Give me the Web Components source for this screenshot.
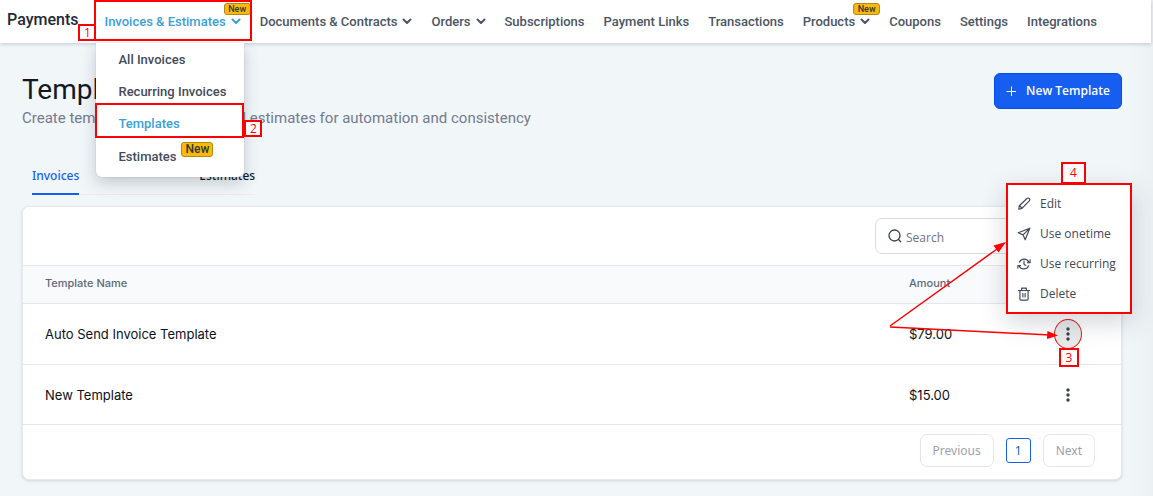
<!DOCTYPE html>
<html lang="en">
<head>
<meta charset="utf-8">
<title>Payments – Templates</title>
<style>
  html { min-height: 100%; background: linear-gradient(to left, #ebf0f3, #f1f6f9 24px); }
  body { margin: 0; font-family: Roboto, sans-serif; color: #111827; }
</style>
</head>
<body>
<payments-app></payments-app>

<script>
const define = (name, css, html, setup) => {
  const tpl = document.createElement('template');
  tpl.innerHTML = `<style>*{box-sizing:border-box}${css}</style>${html}`;
  customElements.define(name, class extends HTMLElement {
    constructor() {
      super();
      this.attachShadow({ mode: 'open' }).append(tpl.content.cloneNode(true));
    }
    connectedCallback() { if (setup) setup(this, this.shadowRoot); }
  });
};

/* Small yellow "New" pill */
define('new-badge', `
  :host { display: inline-flex; align-items: center; justify-content: center; width: 27px; height: 12px;
    box-sizing: border-box; border: 1px solid #b38813; border-radius: 3px; background: #fdb90b; color: #2b3a33;
    font: 500 9px/10px Roboto, sans-serif; }
  :host([large]) { width: 32px; height: 15px; font-size: 12px; line-height: 13px; }
`, `<slot>New</slot>`);

/* Numbered tag of a walkthrough step */
define('step-tag', `
  :host { position: absolute; z-index: 30; display: flex; align-items: center; justify-content: center;
    box-sizing: border-box; width: 18px; height: 17px; border: 2px solid #f00; background: #fff; color: #f00;
    font: 400 12px/12px "Open Sans", sans-serif; }
  :host([wide]) { width: 25px; height: 22px; }
  :host([mid]) { width: 20px; height: 19px; }
`, `<slot></slot>`);

define('nav-item', `
  :host { display: flex; position: relative; flex: none; align-items: center; height: 43px; }
  a, button { display: flex; align-items: center; gap: 5px; padding: 0; border: 0; background: none;
    color: #4b5563; font: 500 13px/20px Roboto, sans-serif; text-decoration: none; white-space: nowrap; cursor: pointer; }
  :host([active]) button { color: #3ba0da; }
  svg { display: block; width: 10px; height: 10px; fill: none; stroke: currentColor; stroke-width: 2;
    stroke-linecap: round; stroke-linejoin: round; }
  ::slotted(new-badge) { position: absolute; top: 3px; right: -10px; }
`, `<span id="c"></span><slot name="badge"></slot><slot name="menu"></slot>`, (el, root) => {
  const label = el.getAttribute('label');
  root.getElementById('c').innerHTML = el.hasAttribute('menu')
    ? `<button type="button" aria-haspopup="true">${label}<svg viewBox="0 0 10 10" aria-hidden="true"><path d="M1.500 2.500l3.500 3.500 3.500-3.500"/></svg></button>`
    : `<a href="#">${label}</a>`;
});

/* Opened submenu below a nav item */
define('nav-menu', `
  :host { position: absolute; z-index: 20; top: 43px; left: -8px; box-sizing: border-box; width: 148px; padding: 1px 0 4px;
    background: #fff; border-radius: 0 0 6px 6px; box-shadow: 0 6px 16px rgba(30,41,59,.22), 0 0 2px rgba(30,41,59,.15); }
  ul { list-style: none; margin: 0; padding: 0; }
  li { position: relative; display: flex; align-items: center; gap: 5px; height: 32px; padding-left: 22px; }
  li:last-child { height: 33px; }
  a { color: #434b5a; font: 500 13px/20px Roboto, sans-serif; text-decoration: none; white-space: nowrap; }
  .on a { color: #3ba0da; }
  .on::after { content: ""; position: absolute; inset: -5px 0 2px -1px; border: 2px solid #f00; pointer-events: none; }
  new-badge { margin-bottom: 14px; }
  step-tag { top: 77px; right: -18px; }
`, `<ul>
  <li><a href="#">All Invoices</a></li>
  <li><a href="#">Recurring Invoices</a></li>
  <li class="on"><a href="#" aria-current="page">Templates</a></li>
  <li><a href="#">Estimates</a><new-badge large></new-badge></li>
</ul><step-tag>2</step-tag>`);

define('nav-focus', `
  :host { position: absolute; z-index: 25; inset: 0 -11px 2px -10px; border: 2px solid #f00; pointer-events: none; }
  step-tag { top: 22px; left: -18px; }
`, `<step-tag>1</step-tag>`);

define('app-nav', `
  :host { display: block; position: relative; z-index: 10; margin-right: 2px; background: #fff;
    box-shadow: 0 1px 4px rgba(30,41,59,.22); }
  nav { display: flex; align-items: center; gap: 19px; height: 43px; padding-left: 7px; }
  strong { margin: 0 7px 4px 0; font: 500 16px/24px Roboto, sans-serif; color: #1f2937; }
`, `<nav aria-label="Payments">
  <strong>Payments</strong>
  <nav-item label="Invoices &amp; Estimates" menu active>
    <new-badge slot="badge"></new-badge>
    <nav-focus slot="menu"></nav-focus>
    <nav-menu slot="menu"></nav-menu>
  </nav-item>
  <nav-item label="Documents &amp; Contracts" menu></nav-item>
  <nav-item label="Orders" menu></nav-item>
  <nav-item label="Subscriptions"></nav-item>
  <nav-item label="Payment Links"></nav-item>
  <nav-item label="Transactions"></nav-item>
  <nav-item label="Products" menu><new-badge slot="badge"></new-badge></nav-item>
  <nav-item label="Coupons"></nav-item>
  <nav-item label="Settings"></nav-item>
  <nav-item label="Integrations"></nav-item>
</nav>`);

define('page-header', `
  :host { display: flex; justify-content: space-between; align-items: flex-start; }
  h1 { margin: 0; font: 400 28px/34px Roboto, sans-serif; color: #111827; }
  p { margin: 1px 0 0; font: 400 15px/20px Roboto, sans-serif; color: #737b90; }
  button { display: flex; align-items: center; justify-content: center; gap: 10px; width: 128px; height: 36px;
    padding: 0; border: 1px solid #004eeb; border-radius: 6px; background: #155eef; color: #fff;
    font: 600 12px/20px "Open Sans", sans-serif; white-space: nowrap; }
  svg { width: 10px; height: 10px; stroke: #fff; stroke-width: 1; fill: none; }
`, `<div><h1>Templates</h1>
  <p>Create templates for invoices and estimates for automation and consistency</p></div>
  <button type="button"><svg viewBox="0 0 10 10" aria-hidden="true"><path d="M5.500 .5v10M.5 5.500h10"/></svg>New Template</button>`);

define('tab-bar', `
  :host { display: flex; }
  div { display: flex; gap: 120px; margin-left: 10px; border-bottom: 1px solid #eceaf0; }
  button { height: 30px; margin-bottom: -1px; padding: 0 0 7px; border: 0; border-bottom: 2px solid transparent;
    background: none; color: #111827; font: 500 12px/18px "Noto Sans", sans-serif; }
  button[aria-selected=true] { color: #155eef; border-color: #155eef; }
`, `<div role="tablist">
  <button role="tab" aria-selected="true">Invoices</button>
  <button role="tab" aria-selected="false">Estimates</button></div>`);

define('row-menu', `
  :host { position: absolute; z-index: 8; top: -136px; right: -50px; box-sizing: border-box; width: 126px; padding: 4px 0 3px;
    border: 2px solid #f00; background: #fff; box-shadow: 0 8px 24px rgba(30,41,59,.2); }
  button { display: flex; align-items: center; gap: 9px; width: 100%; height: 30px; padding: 0 0 0 9px; border: 0;
    background: none; color: #3f4858; font: 400 12px/20px "Open Sans", sans-serif; text-align: left; white-space: nowrap; }
  svg { flex: none; width: 14px; height: 14px; fill: none; stroke: #3f4858; stroke-width: 2; stroke-linecap: round; stroke-linejoin: round; }
  step-tag { top: -23px; left: 53px; }
`, `<div role="menu">
  <button role="menuitem"><svg viewBox="0 0 24 24"><path d="M3 21l1-6L17 2.500a2.800 2.800 0 0 1 4 4L8.500 19.500 3 21zM4.500 15l4 4"/></svg>Edit</button>
  <button role="menuitem"><svg viewBox="0 0 24 24"><path d="M22 2L2 10l8.500 3.500L14 22 22 2zM22 2L10.500 13.500M14 22l-3.500-8.500"/></svg>Use onetime</button>
  <button role="menuitem"><svg viewBox="0 0 24 24"><path d="M4 9a9 9 0 0 1 16.500 0M22.500 5v4.500H18M20 15a9 9 0 0 1-16.500 0M1.500 19v-4.500H6M12 7v5.500l3 2"/></svg>Use recurring</button>
  <button role="menuitem"><svg viewBox="0 0 24 24"><path d="M2.500 6h19M8 6V2h8v4M5 6v15a1.500 1.500 0 0 0 1.500 1.500h11A1.500 1.500 0 0 0 19 21V6M10 11v6M14 11v6"/></svg>Delete</button>
</div><step-tag wide>4</step-tag>`);

/* Arrows that lead from the row to its menu and its menu button */
define('row-arrows', `
  :host { position: absolute; z-index: 9; top: -79px; right: 24px; pointer-events: none; }
  svg { display: block; width: 170px; height: 100px; }
`, `<svg viewBox="0 0 170 100" aria-hidden="true"><g fill="none" stroke="#f00" stroke-width="1.500"><path d="M2 86L109 9"/><path d="M2 87l160 8"/></g>
  <path fill="#f00" d="M118 2l-7.500 10.500-5-7zM170 95.500l-11 3.500.4-8z"/></svg>`);

define('kebab-button', `
  :host { display: inline-flex; position: relative; vertical-align: middle; }
  button { display: flex; align-items: center; justify-content: center; width: 28px; height: 30px; padding: 0;
    border: 1px solid transparent; border-radius: 50%; background: none; }
  :host([open]) button { border-color: #f0101a; background: #e8eaea; }
  svg { width: 4px; height: 16px; fill: #374151; }
`, `<button type="button" aria-label="Row actions"><svg viewBox="0 0 4 16"><circle cx="2" cy="3" r="1.700"/><circle cx="2" cy="8" r="1.700"/><circle cx="2" cy="13" r="1.700"/></svg></button><slot></slot>`);

define('search-box', `
  :host { display: block; }
  label { display: flex; align-items: center; gap: 4px; height: 36px; padding: 0 12px;
    border: 1px solid #d9dce3; border-radius: 7px; background: #fff; }
  svg { flex: none; width: 14px; height: 14px; fill: none; stroke: #374151; stroke-width: 1.300; stroke-linecap: round; }
  input { flex: 1; min-width: 0; height: 22px; padding: 2px 0 0; border: 0; outline: 0; background: none; font: 400 12px/20px "Open Sans", sans-serif; }
  input::placeholder { color: #6b7280; opacity: 1; }
`, `<label><svg viewBox="0 0 14 14" aria-hidden="true"><circle cx="6.500" cy="6.500" r="5.500"/><path d="M10.500 10.500l2.200 2.200"/></svg>
  <input type="search" placeholder="Search" aria-label="Search"></label>`);

define('page-controls', `
  :host { display: flex; align-items: center; justify-content: flex-end; gap: 12px; padding: 9px 26px 12px; }
  button { height: 33px; padding: 0 12px; border: 1px solid #e4e6ee; border-radius: 7px; background: #fff;
    color: #9ba1ab; font: 400 12px/18px "Noto Sans", sans-serif; }
  .current { width: 25px; height: 25px; padding: 0; border-color: #155eef; border-radius: 3px; color: #155eef; }
`, `<button type="button">Previous</button><button type="button" class="current" aria-current="page">1</button><button type="button">Next</button>`);

define('template-card', `
  :host { display: block; background: #fff; border: 1px solid #e6e8ee; border-radius: 7px; box-shadow: 0 1px 3px rgba(30,41,59,.16); }
  .tools { display: flex; justify-content: flex-end; padding: 11px 10px 11px; }
  search-box { width: 236px; }
  table { width: 100%; border-collapse: collapse; table-layout: fixed; font: 400 13px/20px Inter, sans-serif; color: #0b1020; }
  th, td { padding: 0 0 0 22px; text-align: left; border-top: 1px solid #e5e7ef; border-bottom: 1px solid #e5e7ef; }
  th { height: 38px; padding-bottom: 3px; background: #f8fafc; color: #5f6878; font: 500 11px/18px Inter, sans-serif; }
  td { height: 61px; }
  tr:last-child td { height: 60px; }
  .amount { width: 128px; } .act { width: 106px; padding: 0; text-align: center; }
  .act step-tag { top: 29px; left: 5px; }
`, `<div class="tools"><search-box></search-box></div>
<table>
  <thead><tr><th scope="col">Template Name</th><th scope="col" class="amount">Amount</th><th class="act"></th></tr></thead>
  <tbody>
    <tr><td>Auto Send Invoice Template</td><td>$79.00</td><td class="act"><kebab-button open>
      <row-menu></row-menu><row-arrows></row-arrows><step-tag mid>3</step-tag></kebab-button></td></tr>
    <tr><td>New Template</td><td>$15.00</td><td class="act"><kebab-button></kebab-button></td></tr>
  </tbody>
</table>
<page-controls></page-controls>`);

define('payments-app', `
  :host { display: block; }
  main { padding: 30px 31px 16px 22px; }
  tab-bar { margin: 37px 0 11px; }
`, `<app-nav></app-nav><main><page-header></page-header><tab-bar></tab-bar><template-card></template-card></main>`);
</script>
</body>
</html>
